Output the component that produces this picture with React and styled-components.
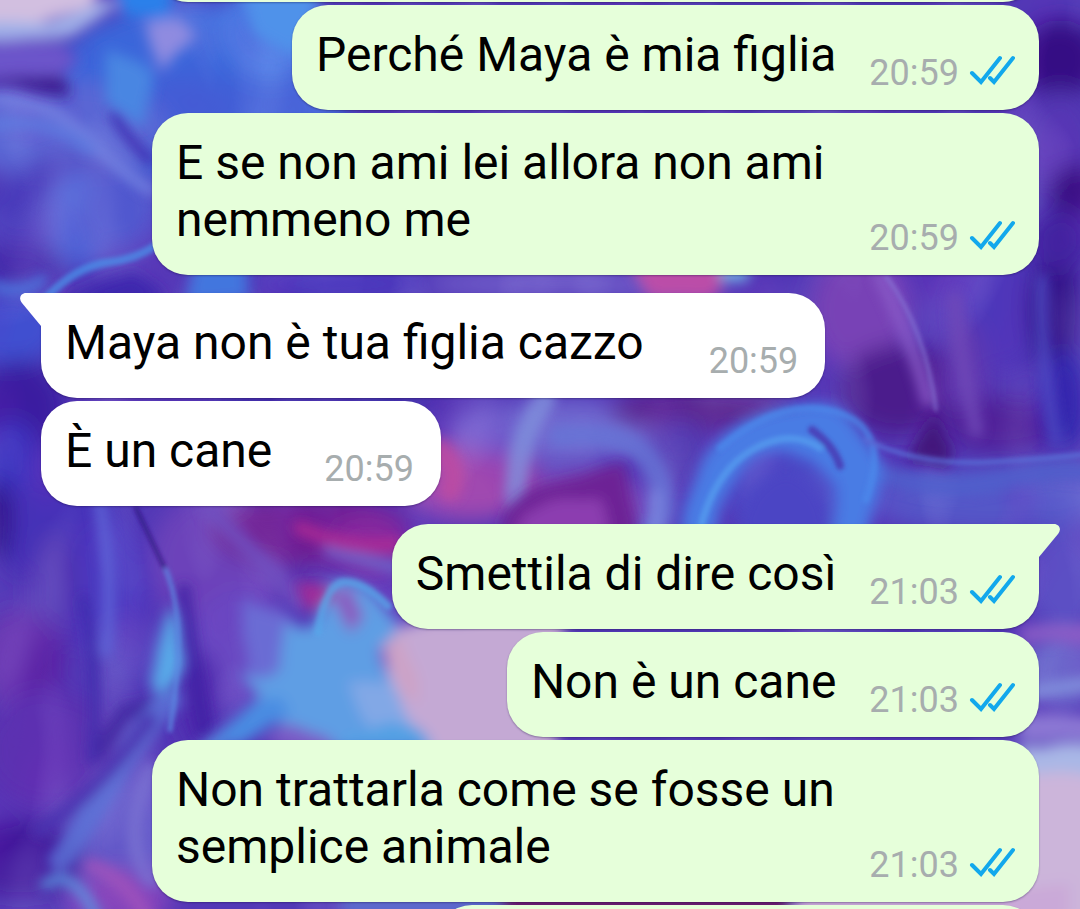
import styled, { createGlobalStyle } from "styled-components";

const messages = [
  { id: 1, side: "out", text: "Perché Maya è mia figlia", time: "20:59" },
  { id: 2, side: "out", text: "E se non ami lei allora non ami nemmeno me", time: "20:59" },
  { id: 3, side: "in", text: "Maya non è tua figlia cazzo", time: "20:59", first: true },
  { id: 4, side: "in", text: "È un cane", time: "20:59" },
  { id: 5, side: "out", text: "Smettila di dire così", time: "21:03", first: true },
  { id: 6, side: "out", text: "Non è un cane", time: "21:03" },
  { id: 7, side: "out", text: "Non trattarla come se fosse un semplice animale", time: "21:03" },
];

// big soft colour areas: [cx, cy, rx, ry, colour]
const clouds = [
  [200, 90, 150, 90, "#3a66da"],
  [270, 30, 50, 50, "#4a7ae4"],
  [60, 130, 110, 50, "#5a66d4"],
  [70, 175, 50, 22, "#5044c0"],
  [40, 215, 60, 40, "#4a3abb"],
  [80, 220, 30, 50, "#4860d6"],
  [120, 210, 40, 40, "#474fcb"],
  [20, 265, 45, 22, "#4128a8"],
  [10, 330, 50, 35, "#3f4fd0"],
  [20, 410, 45, 50, "#3b1aa0"],
  [10, 460, 30, 40, "#3a36c0"],
  [60, 530, 70, 50, "#4531b8"],
  [0, 520, 12, 40, "#2a1084"],
  [220, 560, 70, 70, "#6c42ba"],
  [110, 590, 40, 70, "#4c38c0"],
  [55, 590, 26, 60, "#5030b0"],
  [20, 660, 45, 50, "#5a22a4"],
  [130, 650, 36, 30, "#5846c0"],
  [50, 750, 70, 60, "#5a32b0"],
  [20, 860, 60, 40, "#40189a"],
  [130, 840, 50, 70, "#6458c8"],
  [120, 900, 50, 30, "#8848bc"],
  [240, 650, 50, 60, "#6a4ac2"],
  [200, 700, 20, 50, "#4e28ac"],
  [310, 530, 100, 36, "#6e1a92"],
  [370, 545, 40, 30, "#8a2a9c"],
  [470, 480, 70, 40, "#a048b0"],
  [340, 400, 120, 14, "#3c2aa8"],
  [560, 430, 110, 30, "#6f68cf"],
  [580, 505, 60, 30, "#7c38ac"],
  [700, 410, 90, 22, "#5c2890"],
  [680, 450, 30, 30, "#5038b0"],
  [790, 480, 80, 50, "#4c46c4"],
  [860, 310, 50, 60, "#7842b6"],
  [900, 390, 60, 45, "#4c1f8c"],
  [1000, 310, 50, 60, "#4c38ba"],
  [965, 380, 24, 60, "#6038b0"],
  [1000, 425, 60, 28, "#51229a"],
  [1055, 310, 28, 60, "#35138a"],
  [1065, 400, 26, 50, "#3226ae"],
  [1000, 500, 140, 32, "#5456c8"],
  [1060, 60, 40, 40, "#341084"],
  [1060, 140, 40, 50, "#5238b4"],
  [1075, 190, 26, 26, "#32107c"],
  [1060, 240, 30, 30, "#4320a0"],
  [1065, 580, 40, 50, "#5c50c4"],
  [1065, 670, 40, 40, "#6c6acc"],
  [560, 284, 140, 12, "#7462cc"],
  [340, 284, 90, 12, "#4838c0"],
];

// medium shapes
const patches = [
  ["#d2bfe0", "M-30-30H110L90 8L40 22L-30 22Z"],
  ["#9fb0e8", "M-30 22L50 22L100 4L124 8L70 36L-30 44Z"],
  ["#6c54ca", "M-30 46L60 42L80 60L60 74L-30 78Z"],
  ["#3c1c92", "M-30 80Q30 80 45 74L64 76L70 96L40 94Z"],
  ["#2c80ea", "M108-30H176L164 18L126 20Z"],
  ["#8f8be0", "M140 26L176 14L194 34L160 70L146 50Z"],
  ["#4a86e2", "M106 50L152 70L146 130L108 100Z"],
  ["#4f92ea", "M236-30H330L296 60L258 30Z"],
  ["#4276de", "M188 260H248V304H190Z"],
  ["#3c28ae", "M60 304L100 278L130 272L170 300Z"],
  ["#bb4da8", "M630 260H734L716 300L648 300Z"],
  ["#72b0e4", "M720 262H752V286H724Z"],
  ["#6a6cd4", "M236 600L250 690L276 700L310 640L280 610Z"],
  ["#5f9ee4", "M234 672Q262 690 286 668L280 622L300 626L320 612L334 584Q362 574 388 604L404 628L378 655L388 690L428 740L300 748L272 715L215 754L196 748L262 700Z"],
  ["#4a8ce2", "M206 746Q240 710 280 698L290 714L240 750Z"],
  ["#58a8e8", "M150 680L164 630L176 606L190 660L178 684L158 700Z"],
  ["#8a5cc0", "M336 596L354 586L368 614L352 632Z"],
  ["#c4a9d4", "M384 650L402 630L430 622L560 610V770H432L404 725L386 690Z"],
  ["#cda3c6", "M382 648L404 636L416 704L396 700Z"],
  ["#82a8e6", "M346 686L384 690L416 734L366 728Z"],
  ["#52a0e4", "M346 738L380 724L420 730L434 750H340Z"],
  ["#7a5cc6", "M262 744L285 722L334 738L334 754Z"],
  ["#8a5cc6", "M1020 626L1110 620V644H1020Z"],
  ["#8c78d4", "M1020 712L1110 718V742L1020 738Z"],
  ["#a9b7e6", "M1020 744H1120V772H1020Z"],
  ["#ccb5da", "M1010 772H1130V960H1010Z"],
  ["#caa9d8", "M800 886H1070V960H780Z"],
  ["#6a1c70", "M500 886H790V930H500Z"],
  ["#5c68cc", "M340 886H500V930H340Z"],
  ["#a02c98", "M296 584L320 586L342 594L308 612Z"],
  ["#6d2395", "M508 510Q526 482 590 472L626 460L638 540H500Z"],
  ["#8c3cb0", "M526 516Q560 496 600 496L614 540H516Z"],
  ["#4a7ce4", "M680 540Q692 434 770 408Q850 382 880 470L868 540H838L838 484Q800 440 752 459Q716 490 712 540Z"],
  ["#4c45c4", "M728 540Q740 478 790 470Q832 480 836 540Z"],
  ["#42127c", "M910 460L932 412L954 452L948 470Z"],
];

// wide, smoky strands: [colour, width, path]
const strands = [
  ["#7584e2", 12, "M-5 98Q50 100 88 138T150 190"],
  ["#5d7ce0", 12, "M-5 125Q50 116 90 150"],
  ["#3c2ab0", 12, "M115 115Q128 140 150 160"],
  ["#4b79e0", 12, "M-5 286Q20 296 42 280"],
  ["#5f66d8", 14, "M100 505Q114 580 106 650"],
  ["#4022a4", 14, "M184 590Q190 650 204 730"],
  ["#4025a0", 16, "M168 702L125 712L98 752"],
  ["#3c2aac", 10, "M84 600Q100 680 92 760"],
  ["#5b74d8", 24, "M170 700Q140 730 105 790T60 860"],
  ["#4a30b0", 14, "M150 720Q90 800 40 830"],
  ["#5a94e0", 12, "M46 884Q75 865 100 925"],
  ["#a052bc", 16, "M92 866Q130 880 150 925"],
  ["#7a72d2", 16, "M150 770Q120 840 150 880"],
  ["#6f50c0", 18, "M210 510Q260 560 300 602"],
  ["#6a68cc", 14, "M330 550Q360 560 400 568"],
  ["#b02c94", 14, "M300 528Q350 550 395 544"],
  ["#8090dc", 22, "M545 400Q515 440 516 500"],
  ["#6674d6", 22, "M560 436Q636 428 655 470T650 530"],
  ["#7a8ce2", 14, "M656 496V530"],
  ["#c04ba0", 22, "M440 450Q460 470 450 490"],
  ["#8a5cc8", 14, "M880 276Q912 340 928 400"],
  ["#7048b8", 16, "M955 300Q960 360 976 430"],
  ["#4e4cc4", 12, "M1042 280Q1040 360 1056 440"],
  ["#5060cc", 20, "M870 470Q940 496 1000 480T1100 474"],
  ["#8494de", 14, "M1030 692L1100 682"],
];

// finer lines on top of the smoke
const wisps = [
  ["#4a94ec", 8, "M44 300Q75 266 110 262T170 234"],
  ["#281074", 4, "M136 508Q156 550 172 584"],
  ["#5c8ce4", 5, "M166 570Q178 600 178 640T170 730"],
  ["#56a8ea", 8, "M318 632Q326 582 345 582T388 606"],
  ["#56a0f0", 7, "M700 530Q714 472 752 450T820 448"],
  ["#4c8aec", 7, "M720 448Q780 396 836 412T866 500"],
  ["#4a2ca8", 8, "M812 430Q834 446 840 466"],
  ["#8a80dc", 3, "M886 276Q926 330 936 410"],
  ["#5a74dc", 5, "M866 440Q920 466 990 462T1100 452"],
];

const Wallpaper = () => (
  <WallpaperArt viewBox="0 0 1080 909" preserveAspectRatio="xMidYMid slice" aria-hidden="true">
    <defs>
      <filter id="cloud" x="-20%" y="-20%" width="140%" height="140%">
        <feGaussianBlur stdDeviation="11" />
      </filter>
      <filter id="patch" x="-20%" y="-20%" width="140%" height="140%">
        <feTurbulence type="fractalNoise" baseFrequency="0.014" numOctaves="2" seed="4" />
        <feDisplacementMap in="SourceGraphic" scale="20" xChannelSelector="R" yChannelSelector="G" />
        <feGaussianBlur stdDeviation="7" />
      </filter>
      <filter id="strand" x="-20%" y="-20%" width="140%" height="140%">
        <feGaussianBlur stdDeviation="6" />
      </filter>
      <filter id="wisp" x="-20%" y="-20%" width="140%" height="140%">
        <feGaussianBlur stdDeviation="2" />
      </filter>
      <filter id="smoke" x="0" y="0" width="100%" height="100%">
        <feTurbulence type="fractalNoise" baseFrequency="0.014 0.007" numOctaves="2" seed="11" />
        <feColorMatrix values="0 0 0 0 0.5  0 0 0 0 0.5  0 0 0 0 0.95  2.4 0 0 0 -1.1" />
      </filter>
      <filter id="shade" x="0" y="0" width="100%" height="100%">
        <feTurbulence type="fractalNoise" baseFrequency="0.012 0.008" numOctaves="2" seed="27" />
        <feColorMatrix values="0 0 0 0 0.18  0 0 0 0 0.02  0 0 0 0 0.5  2.4 0 0 0 -1.1" />
      </filter>
    </defs>
    <rect width="1080" height="909" fill="#5238b6" />
    <g filter="url(#cloud)">
      {clouds.map(([cx, cy, rx, ry, fill]) => (
        <ellipse key={`${cx}-${cy}`} cx={cx} cy={cy} rx={rx} ry={ry} fill={fill} />
      ))}
    </g>
    <rect width="1080" height="909" filter="url(#smoke)" opacity="0.25" />
    <rect width="1080" height="909" filter="url(#shade)" opacity="0.3" />
    <g filter="url(#strand)" fill="none" strokeLinecap="round" opacity="0.8">
      {strands.map(([stroke, width, d]) => (
        <path key={d} d={d} stroke={stroke} strokeWidth={width} />
      ))}
    </g>
    <g filter="url(#patch)">
      {patches.map(([fill, d]) => (
        <path key={d} d={d} fill={fill} />
      ))}
    </g>
    <g filter="url(#wisp)" fill="none" strokeLinecap="round" opacity="0.7">
      {wisps.map(([stroke, width, d]) => (
        <path key={d} d={d} stroke={stroke} strokeWidth={width} />
      ))}
    </g>
  </WallpaperArt>
);

const ReadTicks = () => (
  <Ticks viewBox="0 0 46 30" role="img" aria-label="Letto">
    <path d="M3 18L12 27L31 3" />
    <path d="M21 23L25 27L44 3" />
  </Ticks>
);

const Message = ({ side, text, time, first }) => (
  <Bubble $side={side} $first={first}>
    {first && (
      <Tail $side={side} viewBox="0 0 22 34" aria-hidden="true">
        <path d="M22 0H6C1 0-2 5 2 10L21 33H22Z" />
      </Tail>
    )}
    <Text>{text}</Text>
    <Meta $side={side}>
      <Time>{time}</Time>
      {side === "out" && <ReadTicks />}
    </Meta>
  </Bubble>
);

const App = () => {
  return (
    <>
      <GlobalStyle />
      <Page>
        <Wallpaper />
        <TopEdge>
          <CutBubble $width="887px" />
        </TopEdge>
        <Thread>
          {messages.map((message) => (
            <Message key={message.id} {...message} />
          ))}
        </Thread>
        <BottomEdge>
          <CutBubble $width="603px" />
        </BottomEdge>
      </Page>
    </>
  );
};

const GlobalStyle = createGlobalStyle`
  * {
    box-sizing: border-box;
  }

  body {
    margin: 0;
    font-family: Roboto, "Noto Sans", sans-serif;
    background: #5238b6;
  }
`;

const Page = styled.main`
  position: relative;
  display: flex;
  flex-direction: column;
  min-height: 100vh;
  padding: 0 41px;
  overflow: hidden;
`;

const WallpaperArt = styled.svg`
  position: absolute;
  inset: 0;
  width: 100%;
  height: 100%;
`;

const Thread = styled.section`
  position: relative;
  display: flex;
  flex-direction: column;
  gap: 3px;
  padding: 3px 0;
`;

const bubbleGap = ({ $side, $first }) => {
  if ($side === "out") return "33px";
  return $first ? "65px" : "52px";
};

const Bubble = styled.article`
  position: relative;
  display: flex;
  align-items: flex-end;
  justify-content: space-between;
  gap: ${bubbleGap};
  align-self: ${({ $side }) => ($side === "out" ? "flex-end" : "flex-start")};
  max-width: 887px;
  margin-top: ${({ $first }) => ($first ? "15px" : "0")};
  padding: 21px 24px 19px;
  color: #000;
  fill: ${({ $side }) => ($side === "out" ? "#e6ffda" : "#fff")};
  background: ${({ $side }) => ($side === "out" ? "#e6ffda" : "#fff")};
  border-radius: 36px;
  border-top-left-radius: ${({ $side, $first }) => ($first && $side === "in" ? "0" : "36px")};
  border-top-right-radius: ${({ $side, $first }) => ($first && $side === "out" ? "0" : "36px")};
  box-shadow: 0 1px 2px rgba(20, 10, 60, 0.35);
`;

const Tail = styled.svg`
  position: absolute;
  top: 0;
  width: 22px;
  height: 34px;
  ${({ $side }) => ($side === "in" ? "left: -21px;" : "right: -21px; transform: scaleX(-1);")}
`;

const Text = styled.p`
  margin: 0 0 8px;
  font-size: 48px;
  line-height: 57px;
`;

const Meta = styled.div`
  display: flex;
  flex-shrink: 0;
  align-items: flex-end;
  gap: 10px;
  padding-right: ${({ $side }) => ($side === "in" ? "3px" : "0")};
`;

const Time = styled.time`
  color: #a7adae;
  font-size: 36px;
  line-height: 36px;
`;

const Ticks = styled.svg`
  width: 46px;
  height: 30px;
  margin-bottom: 6px;
  fill: none;
  stroke: #12a8ec;
  stroke-width: 4;
  stroke-linecap: round;
`;

const TopEdge = styled.div`
  position: relative;
  display: flex;
  flex: none;
  align-items: flex-end;
  justify-content: flex-end;
  height: 2px;
`;

const BottomEdge = styled.div`
  position: relative;
  display: flex;
  flex: 1 0 4px;
  align-items: flex-start;
  justify-content: flex-end;
  height: 4px;
`;

const CutBubble = styled.div`
  flex: none;
  width: ${({ $width }) => $width};
  max-width: 100%;
  height: 105px;
  background: #e6ffda;
  border-radius: 36px;
  box-shadow: 0 1px 2px rgba(20, 10, 60, 0.35);
`;

export default App;
